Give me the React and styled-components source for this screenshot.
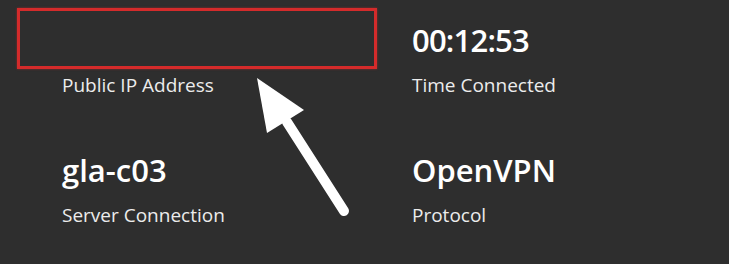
import React from 'react';
import styled, { createGlobalStyle } from 'styled-components';

const GlobalStyle = createGlobalStyle`
    html, body {
        margin: 0;
        padding: 0;
        background: #2e2e2e;
    }
    body {
        font-family: "Open Sans", "Noto Sans", sans-serif;
        -webkit-font-smoothing: antialiased;
    }
`;

const Pagina = styled.div`
    position: relative;
    width: 729px;
    height: 264px;
    background: #2e2e2e;
    overflow: hidden;
`;

const Grade = styled.div`
    display: grid;
    grid-template-columns: 350px 350px;
    row-gap: 53px;
    padding: 20px 0 0 62px;
`;

const Estatistica = styled.div`
    display: flex;
    flex-direction: column;
    gap: 13px;
`;

const Valor = styled.div`
    height: 40px;
    font-size: 31px;
    line-height: 40px;
    font-weight: 600;
    color: #ffffff;
    white-space: nowrap;
    letter-spacing: ${props => (props.$numerico ? '-0.8px' : '0')};
`;

const Rotulo = styled.div`
    font-size: 19px;
    line-height: 24px;
    color: #ececec;
    white-space: nowrap;
`;

const Destaque = styled.div`
    position: absolute;
    left: 17px;
    top: 8px;
    width: 360px;
    height: 61px;
    box-sizing: border-box;
    border: 3px solid #d42b2b;
    box-shadow: 0 0 2px rgba(210, 40, 40, 0.6);
`;

const Seta = styled.svg`
    position: absolute;
    left: 0;
    top: 0;
    pointer-events: none;
`;

const dados = [
    { valor: '', rotulo: 'Public IP Address' },
    { valor: '00:12:53', rotulo: 'Time Connected', numerico: true },
    { valor: 'gla-c03', rotulo: 'Server Connection' },
    { valor: 'OpenVPN', rotulo: 'Protocol' }
];

export default function App() {
    return (
        <Pagina>
            <GlobalStyle />
            <Grade>
                {dados.map(item => (
                    <Estatistica key={item.rotulo}>
                        <Valor $numerico={item.numerico}>{item.valor}</Valor>
                        <Rotulo>{item.rotulo}</Rotulo>
                    </Estatistica>
                ))}
            </Grade>
            <Destaque />
            <Seta width="729" height="264" viewBox="0 0 729 264">
                <line x1="344" y1="211" x2="287" y2="122" stroke="#ffffff" strokeWidth="10" strokeLinecap="round" />
                <polygon points="257,78 304,110 267,133" fill="#ffffff" />
            </Seta>
        </Pagina>
    );
}
